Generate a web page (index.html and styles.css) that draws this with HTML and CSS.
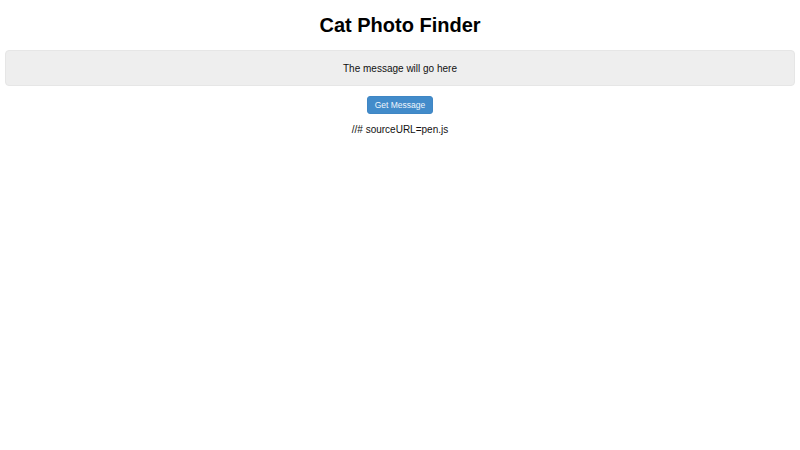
FILE: index.html
```html
<!DOCTYPE html>
<html>
<head>
<meta charset="utf-8">
<title>Cat Photo Finder</title>
<link rel="stylesheet" href="styles.css">
</head>
<body>
<div class="container">
  <h2 class="title">Cat Photo Finder</h2>
  <div class="well message">The message will go here</div>
  <div class="actions">
    <button class="btn-primary" id="getMessage">Get Message</button>
  </div>
  <p class="source">//# sourceURL=pen.js</p>
</div>
</body>
</html>
```
FILE: styles.css
```css
html, body {
  margin: 0;
  padding: 0;
  background: #ffffff;
}
body {
  font-family: "Liberation Sans", Arial, sans-serif;
  color: #111111;
}
.container {
  padding: 0 5px;
  display: flex;
  flex-direction: column;
  align-items: stretch;
  text-align: center;
}
.title {
  margin: 0;
  padding-top: 13px;
  height: 50px;
  box-sizing: border-box;
  font-size: 20px;
  font-weight: bold;
  line-height: 24px;
  color: #000;
}
.well {
  background: #eeeeee;
  border: 1px solid #e6e6e6;
  border-radius: 4px;
  height: 36px;
  box-sizing: border-box;
  display: flex;
  align-items: center;
  justify-content: center;
  font-size: 10px;
  color: #111;
}
.actions {
  margin-top: 10px;
  display: flex;
  justify-content: center;
}
.btn-primary {
  font-family: "Liberation Sans", Arial, sans-serif;
  background: #428bca;
  color: #eef5fc;
  border: 1px solid #3f86c4;
  border-radius: 3px;
  height: 18px;
  padding: 0 7px;
  font-size: 8.5px;
  line-height: 16px;
  cursor: pointer;
}
.source {
  margin: 9px 0 0;
  font-size: 10px;
  line-height: 14px;
  color: #111;
}
```
